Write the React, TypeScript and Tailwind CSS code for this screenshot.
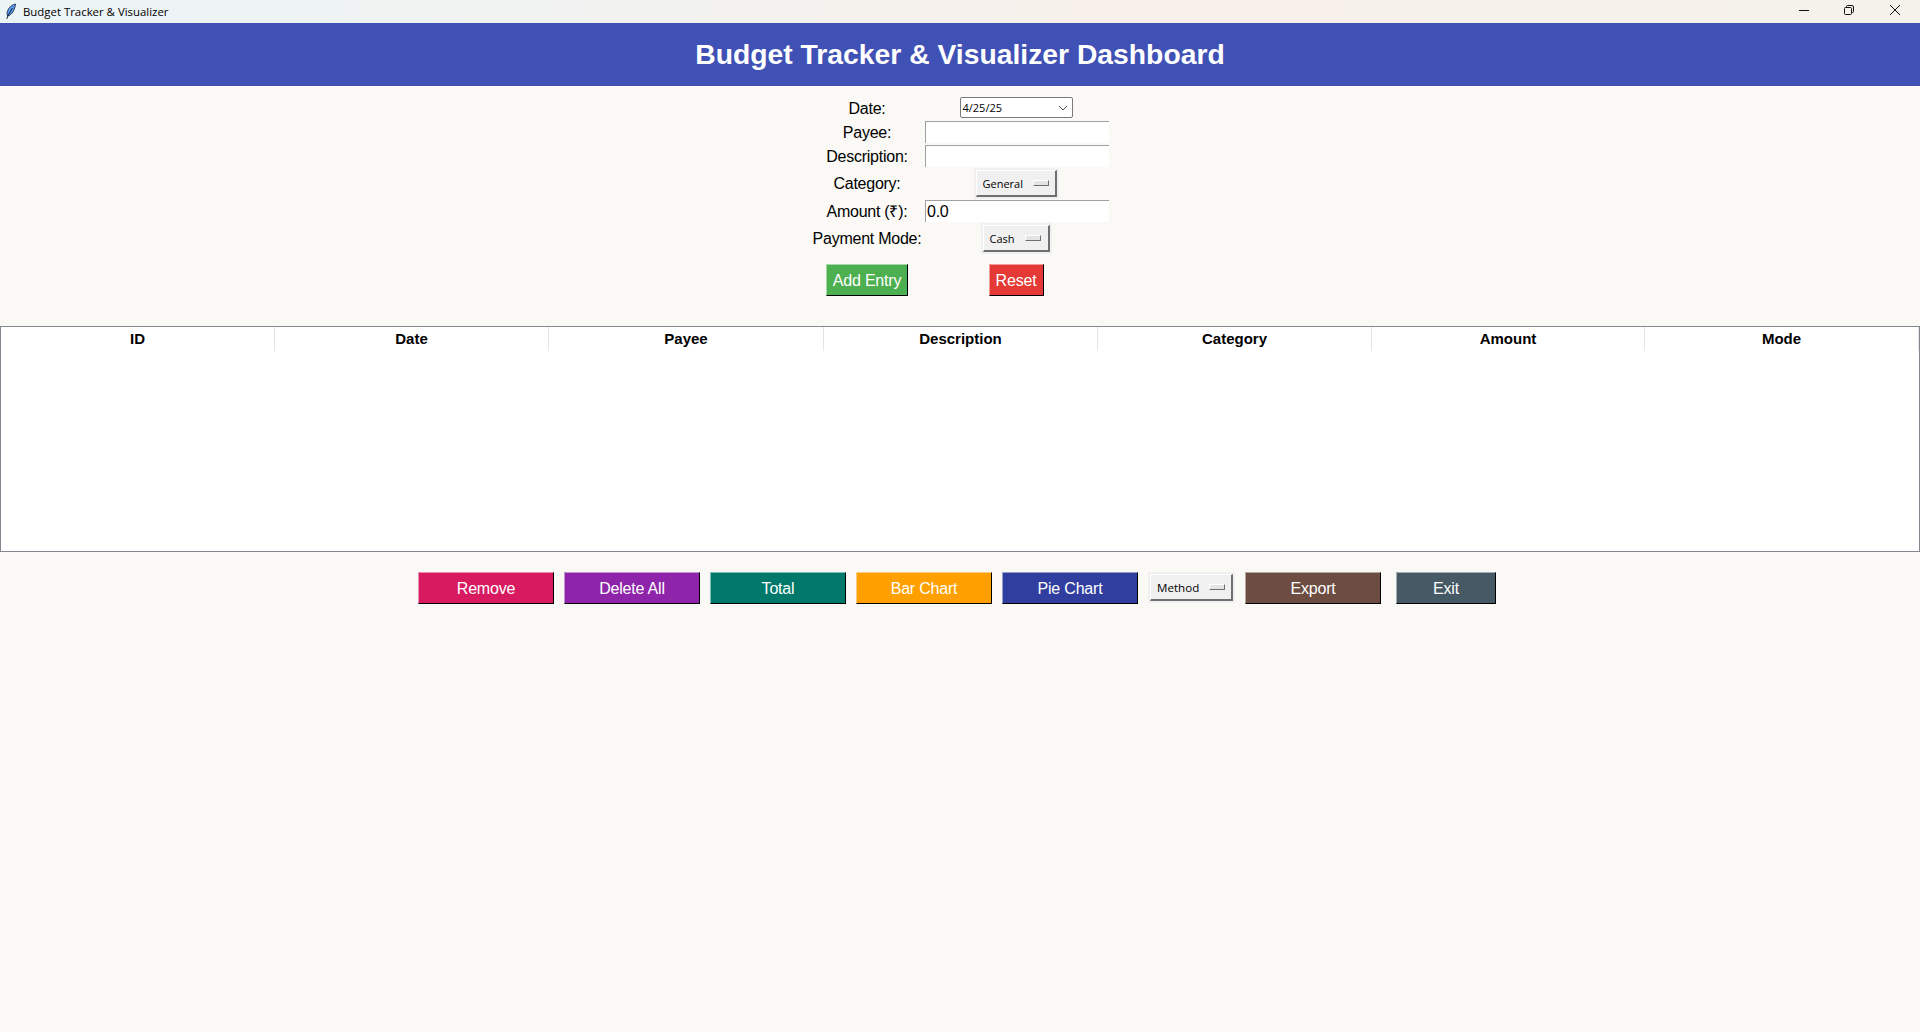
const sans = "font-['Liberation_Sans',Arial,sans-serif]";
const ui = "font-['Open_Sans','Noto_Sans',sans-serif]";

function Label({ children }: { children: React.ReactNode }) {
  return <div className="flex h-[24px] items-center justify-center whitespace-nowrap text-[16px] tracking-[-0.25px] text-black">{children}</div>;
}

function Entry({ value }: { value?: string }) {
  return (
    <div className="h-[22px] w-[184px] border-t border-l border-[#a0a0a0] bg-white pl-[1px] text-[16px] leading-[22px] tracking-[-0.25px] text-black">
      {value}
    </div>
  );
}

function MenuButton({ label, outerW, textCls = "text-[11px]" }: { label: string; outerW: string; textCls?: string }) {
  return (
    <div className={`${outerW} h-[31px] bg-[#f0f0f0] p-[2px]`}>
      <div className={`flex h-full items-center gap-[10px] border-t border-l border-t-white border-l-white border-r-2 border-b-2 border-r-[#6f6f6f] border-b-[#6f6f6f] bg-[#f0f0f0] pl-[6px] ${ui} ${textCls} text-black`}>
        <span className="pt-[2px]">{label}</span>
        <span className="h-[6px] w-[16px] border-t border-l border-t-white border-l-white border-r border-b border-r-[#6f6f6f] border-b-[#6f6f6f] bg-[#e4e4e4]" />
      </div>
    </div>
  );
}

function ColorButton({ label, w, cls }: { label: string; w: string; cls: string }) {
  return (
    <div className={`${w} ${cls} flex h-[32px] items-center justify-center border border-r-black border-b-black pt-[1px] text-[16px] tracking-[-0.2px] text-white`}>
      {label}
    </div>
  );
}

const columns = ["ID", "Date", "Payee", "Description", "Category", "Amount", "Mode"];

export default function App() {
  return (
    <div className={`flex h-[1032px] w-[1920px] flex-col overflow-hidden bg-[#faf9f6] ${sans}`}>
      <div className="flex h-[23px] items-center bg-[linear-gradient(90deg,#ecf4f6_0%,#f0f3f2_25%,#f8f0ea_60%,#f5f2ec_100%)]">
        <svg className="ml-[5px] h-[17px] w-[12px]" viewBox="0 0 12 16">
          <path d="M10.5 .5C6 1.5 2.5 5 2 10c0 1 .2 2 .8 2.5C7 11.5 10 6 10.5 .5Z" fill="#5c9cf0" stroke="#10203a" strokeWidth=".8" />
          <path d="M7.5 4.5 2.8 12.5 1.8 15.5" fill="none" stroke="#0b1220" strokeWidth=".9" />
        </svg>
        <span className={`ml-[6px] ${ui} text-[11.4px] text-black`}>Budget Tracker &amp; Visualizer</span>
        <div className="ml-auto mb-[3px] flex h-full items-center">
          <svg className="mr-[33px] h-[12px] w-[12px]" viewBox="0 0 12 12"><path d="M1 6.5h10" stroke="#111" /></svg>
          <svg className="mr-[34px] h-[12px] w-[12px]" viewBox="0 0 12 12" fill="none" stroke="#111"><rect x="1.5" y="3.5" width="7" height="7" rx="1" /><path d="M3.5 3V2.5a1 1 0 0 1 1-1h4.5a1.5 1.5 0 0 1 1.5 1.5V7.5a1 1 0 0 1-1 1H9" /></svg>
          <svg className="mr-[19px] h-[12px] w-[12px]" viewBox="0 0 12 12"><path d="M1 1l10 10M11 1 1 11" stroke="#111" /></svg>
        </div>
      </div>

      <header className="flex h-[63px] items-center justify-center bg-[#3f51b5] text-[28.3px] font-bold text-white">
        Budget Tracker &amp; Visualizer Dashboard
      </header>

      <div className="mt-[11px] ml-[809px] grid w-[300px] grid-cols-[116px_184px] grid-rows-[24px_24px_23px_32px_23px_31px]">
        <Label>Date:</Label>
        <div className="flex justify-center pr-[2px]">
          <div className={`flex h-[21px] w-[113px] items-center justify-between rounded-[2px] border border-[#7a7a7a] bg-white pr-[4px] pl-[2px] ${ui} text-[11px] text-black`}>
            <span className="pt-[1px]">4/25/25</span>
            <svg className="h-[8px] w-[10px]" viewBox="0 0 10 8" fill="none" stroke="#555"><path d="M1 2l4 4 4-4" /></svg>
          </div>
        </div>
        <Label>Payee:</Label>
        <Entry />
        <Label>Description:</Label>
        <Entry />
        <div className="flex items-start justify-center pt-[4px]"><Label>Category:</Label></div>
        <div className="flex justify-center pr-[2px]"><MenuButton label="General" outerW="w-[85px]" /></div>
        <Label>Amount (₹):</Label>
        <Entry value="0.0" />
        <div className="flex items-start justify-center pt-[4px]"><Label>Payment Mode:</Label></div>
        <div className="flex justify-center pr-[2px]"><MenuButton label="Cash" outerW="w-[71px]" /></div>
      </div>

      <div className="mt-[10px] ml-[809px] grid w-[300px] grid-cols-[116px_184px]">
        <div className="flex justify-center"><ColorButton label="Add Entry" w="w-[82px]" cls="bg-[#4caf50] border-t-[#a5d7a7] border-l-[#a5d7a7]" /></div>
        <div className="flex justify-center pr-[2px]"><ColorButton label="Reset" w="w-[55px]" cls="bg-[#e53935] border-t-[#f29c9a] border-l-[#f29c9a]" /></div>
      </div>

      <div className="mt-[30px] h-[226px] border border-[#828790] bg-white">
        <div className="grid h-[24px] grid-cols-[274px_274px_275px_274px_274px_273px_1fr]">
          {columns.map((c) => (
            <div key={c} className="flex items-center justify-center border-r border-[#e5e5e5] text-[15px] font-bold text-black">
              {c}
            </div>
          ))}
        </div>
      </div>

      <div className="mt-[20px] flex pl-[418px]">
        <ColorButton label="Remove" w="w-[136px]" cls="bg-[#d81b60] border-t-[#eb8db0] border-l-[#eb8db0]" />
        <ColorButton label="Delete All" w="ml-[10px] w-[136px]" cls="bg-[#8e24aa] border-t-[#c691d4] border-l-[#c691d4]" />
        <ColorButton label="Total" w="ml-[10px] w-[136px]" cls="bg-[#00796b] border-t-[#7fbcb5] border-l-[#7fbcb5]" />
        <ColorButton label="Bar Chart" w="ml-[10px] w-[136px]" cls="bg-[#ffa000] border-t-[#ffcf7f] border-l-[#ffcf7f]" />
        <ColorButton label="Pie Chart" w="ml-[10px] w-[136px]" cls="bg-[#303f9f] border-t-[#979fcf] border-l-[#979fcf]" />
        <div className="ml-[10px]"><MenuButton label="Method" outerW="w-[87px]" textCls="text-[11.6px]" /></div>
        <ColorButton label="Export" w="ml-[10px] w-[136px]" cls="bg-[#6d4c41] border-t-[#b6a5a0] border-l-[#b6a5a0]" />
        <ColorButton label="Exit" w="ml-[15px] w-[100px]" cls="bg-[#455a64] border-t-[#a2acb1] border-l-[#a2acb1]" />
      </div>
    </div>
  );
}
